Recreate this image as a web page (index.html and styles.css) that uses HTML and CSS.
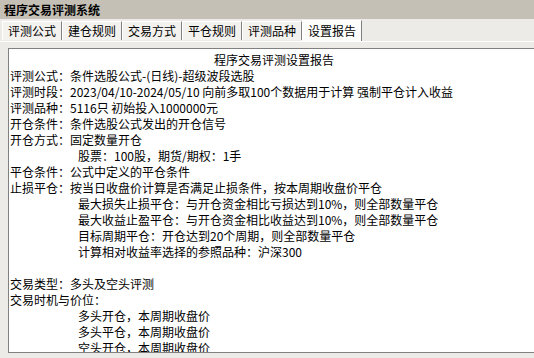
FILE: index.html
```html
<!DOCTYPE html>
<html lang="zh-CN">
<head>
    <meta charset="UTF-8">
    <title>程序交易评测系统</title>
    <link rel="stylesheet" href="styles.css">
</head>
<body>
    <div class="titlebar">程序交易评测系统</div>
    <div class="tabs">
        <div class="tab">评测公式</div>
        <div class="tab">建仓规则</div>
        <div class="tab">交易方式</div>
        <div class="tab">平仓规则</div>
        <div class="tab">评测品种</div>
        <div class="tab active">设置报告</div>
    </div>
    <div class="panel">
        <div class="report">
            <div class="line head">程序交易评测设置报告</div>
            <div class="line">评测公式：条件选股公式-(日线)-超级波段选股</div>
            <div class="line">评测时段：2023/04/10-2024/05/10 向前多取100个数据用于计算 强制平仓计入收益</div>
            <div class="line">评测品种：5116只 初始投入1000000元</div>
            <div class="line">开仓条件：条件选股公式发出的开仓信号</div>
            <div class="line">开仓方式：固定数量开仓</div>
            <div class="line sub">股票：100股，期货/期权：1手</div>
            <div class="line">平仓条件：公式中定义的平仓条件</div>
            <div class="line">止损平仓：按当日收盘价计算是否满足止损条件，按本周期收盘价平仓</div>
            <div class="line sub">最大损失止损平仓：与开仓资金相比亏损达到10%，则全部数量平仓</div>
            <div class="line sub">最大收益止盈平仓：与开仓资金相比收益达到10%，则全部数量平仓</div>
            <div class="line sub">目标周期平仓：开仓达到20个周期，则全部数量平仓</div>
            <div class="line sub">计算相对收益率选择的参照品种：沪深300</div>
            <div class="line">&nbsp;</div>
            <div class="line">交易类型：多头及空头评测</div>
            <div class="line">交易时机与价位：</div>
            <div class="line sub">多头开仓，本周期收盘价</div>
            <div class="line sub">多头平仓，本周期收盘价</div>
            <div class="line sub">空头开仓，本周期收盘价</div>
        </div>
    </div>
</body>
</html>
```

FILE: styles.css
```css
body {
    margin: 0;
    width: 534px;
    height: 358px;
    overflow: hidden;
    font-family: "Noto Sans CJK SC", sans-serif;
    font-size: 12px;
    color: #000;
    background: #ecebe7;
}
.titlebar {
    height: 19px;
    line-height: 19px;
    padding-left: 4px;
    background: #c4c0b5;
    font-weight: bold;
}
.tabs {
    display: flex;
    align-items: flex-end;
    height: 22px;
    padding-left: 2px;
}
.tab {
    width: 48px;
    height: 18px;
    line-height: 18px;
    padding: 0 5px;
    margin-bottom: 1px;
    background: #f3f2ef;
    border-top: 1px solid #fff;
    border-left: 1px solid #fff;
    border-right: 1px solid #808080;
}
.tab.active {
    height: 20px;
    line-height: 19px;
    margin-bottom: 0;
    background: #fcfcfb;
}
.panel {
    border-top: 1px solid #fff;
    padding: 6px 0 0 8px;
}
.report {
    box-sizing: border-box;
    height: 305px;
    padding: 3px 0 0 1px;
    margin-right: -4px;
    background: #fff;
    border: 1px solid #808080;
    border-right: none;
    overflow: hidden;
}
.line {
    height: 16px;
    line-height: 16px;
    white-space: pre;
}
.head { text-align: center; }
.sub { padding-left: 68px; }
```
